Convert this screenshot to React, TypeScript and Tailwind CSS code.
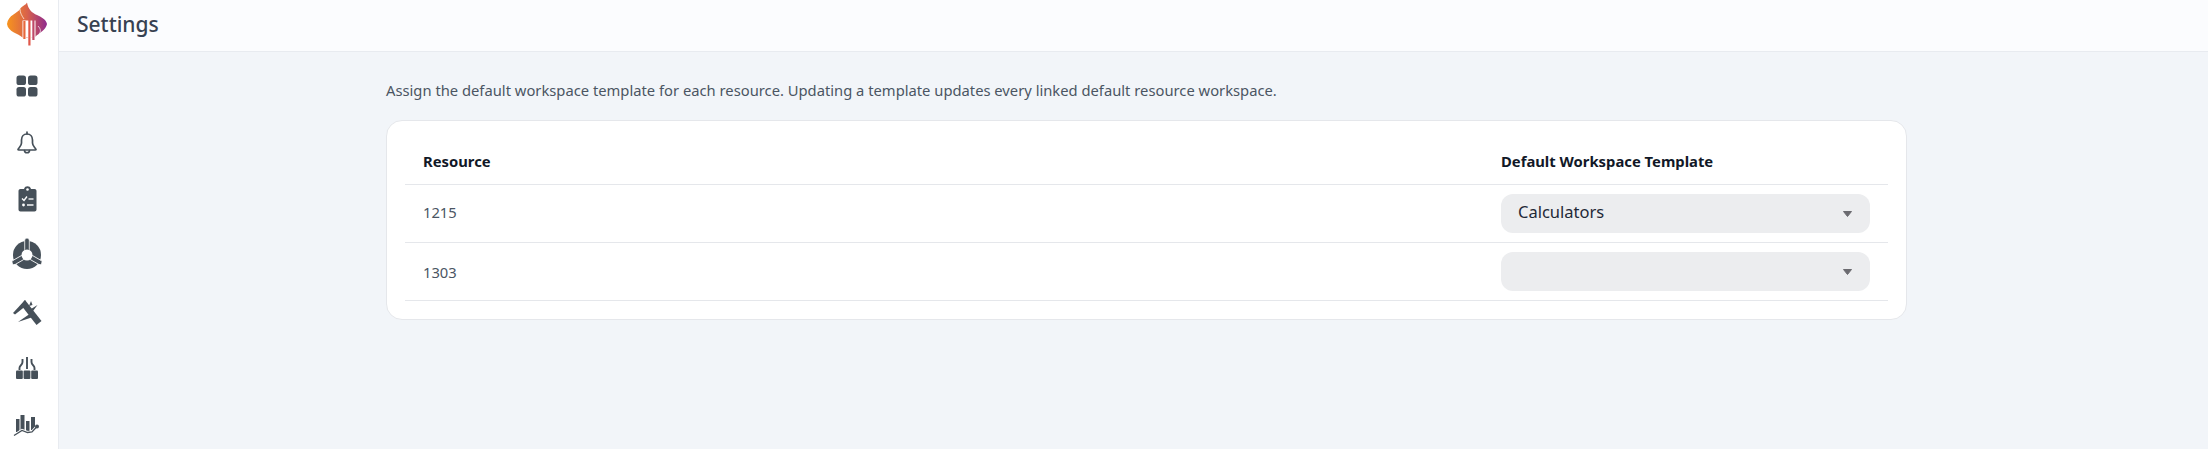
import React from "react";

const ink = "#465059";

function Logo() {
  return (
    <svg width="40" height="44" viewBox="7 2 40 44">
      <defs>
        <linearGradient id="fl" x1="0" y1="0" x2="1" y2="0">
          <stop offset="0" stopColor="#f7941d" />
          <stop offset="0.5" stopColor="#d9624a" />
          <stop offset="1" stopColor="#8e2a8f" />
        </linearGradient>
      </defs>
      <path
        d="M27 2.500 C26 5 22 6 20 9 C18 13 8 15 7 24 C8 32 18 33 23 38 L35 37 C39 33 46 30 47 24 C46 19 41 17 37 15 C32 13 28 9 27 2.500 Z"
        fill="url(#fl)"
      />
      <path d="M20 9 C20 13 22 16 24 19" stroke="#fff" strokeWidth="0.800" fill="none" opacity="0.850" />
      <path d="M38 26 C41 29 41 32 39 34" stroke="#fff" strokeWidth="0.800" fill="none" opacity="0.850" />
      <rect x="22.500" y="20.500" width="13" height="17" fill="#fff" />
      <rect x="22.500" y="37" width="3.500" height="3" fill="#fff" />
      <rect x="28" y="37" width="3" height="9" fill="#fff" />
      <rect x="23.300" y="21" width="2.200" height="18" fill="#e8683c" />
      <rect x="28.300" y="20" width="2.200" height="25.500" fill="#e0584a" />
      <rect x="32.300" y="20" width="2.200" height="20" fill="#c04a68" />
    </svg>
  );
}

const Grid = () => (
  <svg width="22" height="22" viewBox="0 0 22 22" fill={ink}>
    <rect x="0.500" y="0.500" width="9.500" height="9.500" rx="2.600" />
    <rect x="12" y="0.500" width="9.500" height="9.500" rx="2.600" />
    <rect x="0.500" y="12" width="9.500" height="9.500" rx="2.600" />
    <rect x="12" y="12" width="9.500" height="9.500" rx="2.600" />
  </svg>
);

const Bell = () => (
  <svg width="22" height="24" viewBox="0 0 22 24" fill="none" stroke={ink} strokeWidth="1.700" strokeLinejoin="round" strokeLinecap="round">
    <path d="M11 3 C7.500 3 5.500 5.500 5.500 9 V12 C5.500 15 3 16.500 2 18.500 C2 19 2.500 19 3 19 H19 C19.500 19 20 19 20 18.500 C19 16.500 16.500 15 16.500 12 V9 C16.500 5.500 14.500 3 11 3 Z" />
    <path d="M11 1 V3" />
    <path d="M8.500 19.500 C8.500 22.500 13.500 22.500 13.500 19.500" />
  </svg>
);

const Clipboard = () => (
  <svg width="19" height="26" viewBox="0 0 18 26">
    <path
      d="M2 3 H5.500 C6 1 7.500 0.300 9 0.300 C10.500 0.300 12 1 12.500 3 H16 C17.200 3 18 3.800 18 5 V23.500 C18 24.700 17.200 25.500 16 25.500 H2 C0.800 25.500 0 24.700 0 23.500 V5 C0 3.800 0.800 3 2 3 Z"
      fill={ink}
    />
    <circle cx="9" cy="3.500" r="1.300" fill="#fff" />
    <path d="M3.500 12.500 L5.500 14.500 L8.500 10.500" stroke="#fff" strokeWidth="1.400" fill="none" />
    <path d="M10 13 H15" stroke="#fff" strokeWidth="1.300" />
    <path d="M8.500 19 H15" stroke="#fff" strokeWidth="1.800" opacity="0.800" />
    <circle cx="5" cy="19" r="1.400" fill="#fff" />
  </svg>
);

const Hub = () => (
  <svg width="32" height="36" viewBox="11 237 32 36">
    <circle cx="27" cy="255" r="14" fill={ink} />
    <g stroke="#fff" strokeWidth="0.800" fill={ink}>
      <rect x="24.700" y="238" width="4.600" height="14" rx="2.300" />
      <rect x="24.700" y="238" width="4.600" height="14" rx="2.300" transform="rotate(120 27 255)" />
      <rect x="24.700" y="238" width="4.600" height="14" rx="2.300" transform="rotate(240 27 255)" />
    </g>
    <circle cx="27" cy="255" r="5.500" fill="#fff" />
  </svg>
);

const Calipers = () => (
  <svg width="30" height="26" viewBox="12 299 30 26" fill={ink}>
    <path d="M25 300 L41.500 321 L36.500 325 L21 305 Z" />
    <path d="M13 313 L25 300 L27 305 L15 314.500 Z" />
    <path d="M18 322 L31 313 L33 317 Z" />
    <path d="M29 306 L31 301 L32.500 305 Z" />
    <path d="M31 309 L37.500 305 L33 311 Z" />
  </svg>
);

const Pipes = () => (
  <svg width="24" height="24" viewBox="15 356 24 24">
    <g fill={ink}>
      <rect x="16" y="370.500" width="6.800" height="8.500" rx="1" />
      <rect x="23.600" y="370.500" width="6.800" height="8.500" rx="1" />
      <rect x="31.200" y="370.500" width="6.800" height="8.500" rx="1" />
    </g>
    <g fill="none" stroke={ink} strokeWidth="1.900">
      <path d="M27 369 V357" />
      <path d="M19.500 370 V368 C19.500 365 22.500 365.500 22.500 362 V359" />
      <path d="M34.500 370 V368 C34.500 365 31.500 365.500 31.500 362 V359" />
    </g>
  </svg>
);

const Chart = () => (
  <svg width="28" height="24" viewBox="14 412 28 24">
    <g fill={ink}>
      <rect x="17" y="418" width="3.500" height="13" />
      <rect x="21.500" y="414" width="4" height="15" />
      <rect x="27" y="420" width="3.500" height="11" />
      <rect x="32" y="416" width="4" height="13" />
    </g>
    <path d="M15 434.500 L23 429.500 L28.500 431.500 L33 431 L38 425.500" fill="none" stroke="#fff" strokeWidth="3" />
    <path d="M15 434.500 L23 429.500 L28.500 431.500 L33 431 L38 425.500" fill="none" stroke={ink} strokeWidth="1.300" />
    <circle cx="38" cy="425.500" r="2" fill={ink} />
  </svg>
);

const Caret = () => (
  <svg width="9" height="6" viewBox="0 0 9 6" className="shrink-0">
    <path d="M0.500 0.500 H8.500 L4.500 5.500 Z" fill="#6b6b70" stroke="#6b6b70" strokeLinejoin="round" />
  </svg>
);

function Rail({ children }: { children: React.ReactNode }) {
  return <div className="h-[56.4px] flex items-center justify-center shrink-0">{children}</div>;
}

function Row({ id, value, idOffset }: { id: string; value: string; idOffset: string }) {
  return (
    <div className="flex h-[58px] items-center border-b border-[#e5e7eb]">
      <div className={`flex-1 pl-[18px] text-[14.750px] text-[#4b5563] ${idOffset}`}>{id}</div>
      <div className="w-[387px]">
        <div className="w-[369px] h-[39px] rounded-[12px] bg-[#ecedef] flex items-center justify-between pl-[17px] pr-[18px] text-[16.500px] text-[#1f2937]">
          <span className="-mt-[2px]">{value}</span>
          <Caret />
        </div>
      </div>
    </div>
  );
}

export default function App() {
  return (
    <div className="w-[2208px] h-[449px] overflow-hidden flex bg-[#f2f5f9] font-['Noto_Sans',sans-serif]">
      <aside className="w-[59px] shrink-0 h-full bg-white border-r border-[#e8ebf0] pr-[4px] flex flex-col">
        <div className="h-[58px] pt-[2px] flex justify-center shrink-0">
          <Logo />
        </div>
        <Rail><Grid /></Rail>
        <Rail><Bell /></Rail>
        <Rail><Clipboard /></Rail>
        <Rail><Hub /></Rail>
        <Rail><Calipers /></Rail>
        <Rail><Pipes /></Rail>
        <Rail><Chart /></Rail>
      </aside>
      <div className="flex-1 flex flex-col min-w-0">
        <header className="h-[52px] shrink-0 bg-[#fbfcfe] border-b border-[#e8ebf0] flex items-center pl-[18px] pb-[2px] text-[21px] font-medium text-[#374151]">
          Settings
        </header>
        <main className="pl-[327px] pt-[25px]">
          <p className="h-[26px] text-[14.750px] leading-[26px] text-[#4b5563] whitespace-nowrap">
            Assign the default workspace template for each resource. Updating a template updates every linked default resource workspace.
          </p>
          <section className="mt-[17px] w-[1521px] h-[200px] bg-white border border-[#e5e7eb] rounded-[16px] px-[18px]">
            <div className="flex h-[64px] items-center pt-[17px] border-b border-[#e5e7eb] text-[14.800px] font-bold text-[#111827]">
              <div className="flex-1 pl-[18px]">Resource</div>
              <div className="w-[387px]">Default Workspace Template</div>
            </div>
            <Row id="1215" value="Calculators" idOffset="-mt-[2px]" />
            <Row id="1303" value="" idOffset="mt-[1px]" />
          </section>
        </main>
      </div>
    </div>
  );
}
